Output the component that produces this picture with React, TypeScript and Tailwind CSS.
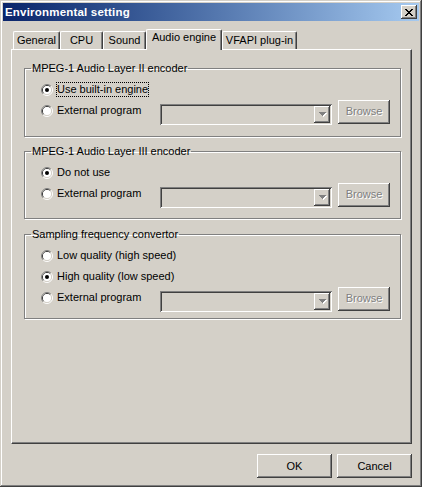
import React from 'react';

const raised =
  'shadow-[inset_-1px_-1px_#404040,inset_1px_1px_#ffffff,inset_-2px_-2px_#808080,inset_2px_2px_#d4d0c8]';
const sunken =
  'shadow-[inset_1px_1px_#808080,inset_-1px_-1px_#ffffff,inset_2px_2px_#404040,inset_-2px_-2px_#d4d0c8]';

function CloseGlyph() {
  const rows = ['11000011', '01100110', '00111100', '00011000', '00111100', '01100110', '11000011'];
  return (
    <svg width="8" height="7" shapeRendering="crispEdges">
      {rows.flatMap((r, y) =>
        r.split('').map((c, x) =>
          c === '1' ? <rect key={`${x}-${y}`} x={x} y={y} width="1" height="1" fill="#000" /> : null
        )
      )}
    </svg>
  );
}

function Radio({ checked }: { checked?: boolean }) {
  return (
    <svg width="12" height="12" viewBox="0 0 12 12" className="shrink-0">
      <path d="M2.11 9.89A5.5 5.5 0 0 1 9.89 2.11" fill="none" stroke="#808080" />
      <path d="M9.89 2.11A5.5 5.5 0 0 1 2.11 9.89" fill="none" stroke="#ffffff" />
      <path d="M2.82 9.18A4.5 4.5 0 0 1 9.18 2.82" fill="none" stroke="#404040" />
      <path d="M9.18 2.82A4.5 4.5 0 0 1 2.82 9.18" fill="none" stroke="#d4d0c8" />
      <circle cx="6" cy="6" r="4" fill="#ffffff" />
      {checked && <circle cx="6" cy="6" r="2" fill="#000000" />}
    </svg>
  );
}

function DropArrow() {
  // disabled arrow: grey triangle with a white shadow
  const tri = [
    [0, 7],
    [1, 5],
    [2, 3],
    [3, 1],
  ];
  return (
    <svg width="8" height="5" shapeRendering="crispEdges">
      {tri.map(([o, w], y) => (
        <rect key={`s${y}`} x={o + 1} y={y + 1} width={w} height="1" fill="#ffffff" />
      ))}
      {tri.map(([o, w], y) => (
        <rect key={`a${y}`} x={o} y={y} width={w} height="1" fill="#808080" />
      ))}
    </svg>
  );
}

function Combo() {
  return (
    <div className={`mt-[7px] flex h-[21px] w-[172px] shrink-0 justify-end p-[2px] ${sunken}`}>
      <div className={`flex h-[17px] w-[16px] items-center justify-center pl-[1px] pt-[1px] ${raised}`}>
        <DropArrow />
      </div>
    </div>
  );
}

function BrowseButton() {
  return (
    <div
      className={`ml-[6px] mt-[2px] flex h-[24px] w-[52px] shrink-0 items-center justify-center text-[#808080] [text-shadow:1px_1px_0_#ffffff] ${raised}`}
    >
      Browse
    </div>
  );
}

type RowProps = { label: string; checked?: boolean; focus?: boolean; external?: boolean };

function Row({ label, checked, focus, external }: RowProps) {
  return (
    <div className="flex h-[21px] items-center">
      <div className="flex w-[119px] shrink-0 items-center gap-[3px]">
        <Radio checked={checked} />
        <span
          className={`border leading-[13px] whitespace-nowrap ${
            focus ? 'border-dotted border-black' : 'border-transparent'
          }`}
        >
          {label}
        </span>
      </div>
      {external && (
        <>
          <Combo />
          <BrowseButton />
        </>
      )}
    </div>
  );
}

function Group({ title, rows, className }: { title: string; rows: RowProps[]; className: string }) {
  return (
    <fieldset
      className={`ml-[12px] mr-[10px] border border-[#808080] shadow-[inset_1px_1px_#ffffff,1px_1px_#ffffff] ${className}`}
    >
      <legend className="ml-[6px] px-[1px] leading-[13px]">{title}</legend>
      <div className="pl-[16px] pt-[4px]">
        {rows.map((r) => (
          <Row key={r.label + r.external} {...r} />
        ))}
      </div>
    </fieldset>
  );
}

const tabs = [
  { name: 'General', w: 'w-[47px]' },
  { name: 'CPU', w: 'w-[43px]' },
  { name: 'Sound', w: 'w-[43px]' },
  { name: 'Audio engine', w: 'w-[76px]', active: true },
  { name: 'VFAPI plug-in', w: 'w-[75px]' },
];

export default function App() {
  return (
    <div
      className="flex h-[487px] w-[422px] flex-col bg-[#d4d0c8] p-[3px] font-['Liberation_Sans',Arial,sans-serif] text-[11px] leading-[13px] text-black shadow-[inset_-1px_-1px_#404040,inset_1px_1px_#d4d0c8,inset_-2px_-2px_#808080,inset_2px_2px_#ffffff]"
    >
      {/* Title bar */}
      <div className="flex h-[18px] shrink-0 items-center justify-between bg-linear-to-r from-[#0a246a] to-[#a6caf0] pl-[2px] pr-[2px]">
        <span className="text-[11.5px] font-bold tracking-[0.2px] text-white">Environmental setting</span>
        <div className={`flex h-[14px] w-[16px] items-center justify-center bg-[#d4d0c8] ${raised}`}>
          <CloseGlyph />
        </div>
      </div>

      <div className="flex flex-1 flex-col pl-[8px] pr-[7px] pt-[8px]">
        {/* Tabs */}
        <div className="relative z-10 flex h-[20px] shrink-0 items-end pl-[2px]">
          {tabs.map((t) =>
            t.active ? (
              <div
                key={t.name}
                className={`-mb-[1px] h-[21px] shrink-0 rounded-t-[2px] border-l border-t border-r border-l-white border-t-white border-r-[#404040] bg-[#d4d0c8] pt-[1px] text-center whitespace-nowrap shadow-[inset_-1px_0_#808080] ${t.w}`}
              >
                {t.name}
              </div>
            ) : (
              <div
                key={t.name}
                className={`h-[18px] shrink-0 rounded-t-[2px] border-l border-t border-r border-l-white border-t-white border-r-[#404040] pt-[2px] text-center whitespace-nowrap shadow-[inset_-1px_0_#808080] ${t.w}`}
              >
                {t.name}
              </div>
            )
          )}
        </div>

        {/* Panel */}
        <div className="flex h-[395px] shrink-0 flex-col border border-l-white border-t-white border-r-[#404040] border-b-[#404040] shadow-[inset_-1px_-1px_#808080]">
          <Group
            title="MPEG-1 Audio Layer II encoder"
            className="mt-[12px] pb-[15px]"
            rows={[
              { label: 'Use built-in engine', checked: true, focus: true },
              { label: 'External program', external: true },
            ]}
          />
          <Group
            title="MPEG-1 Audio Layer III encoder"
            className="mt-[8px] pb-[14px]"
            rows={[
              { label: 'Do not use', checked: true },
              { label: 'External program', external: true },
            ]}
          />
          <Group
            title="Sampling frequency convertor"
            className="mt-[9px] pb-[10px]"
            rows={[
              { label: 'Low quality (high speed)' },
              { label: 'High quality (low speed)', checked: true },
              { label: 'External program', external: true },
            ]}
          />
        </div>

        {/* Dialog buttons */}
        <div className="mt-[10px] flex justify-end gap-[5px]">
          <button className={`h-[24px] w-[75px] ${raised}`}>OK</button>
          <button className={`h-[24px] w-[75px] ${raised}`}>Cancel</button>
        </div>
      </div>
    </div>
  );
}
